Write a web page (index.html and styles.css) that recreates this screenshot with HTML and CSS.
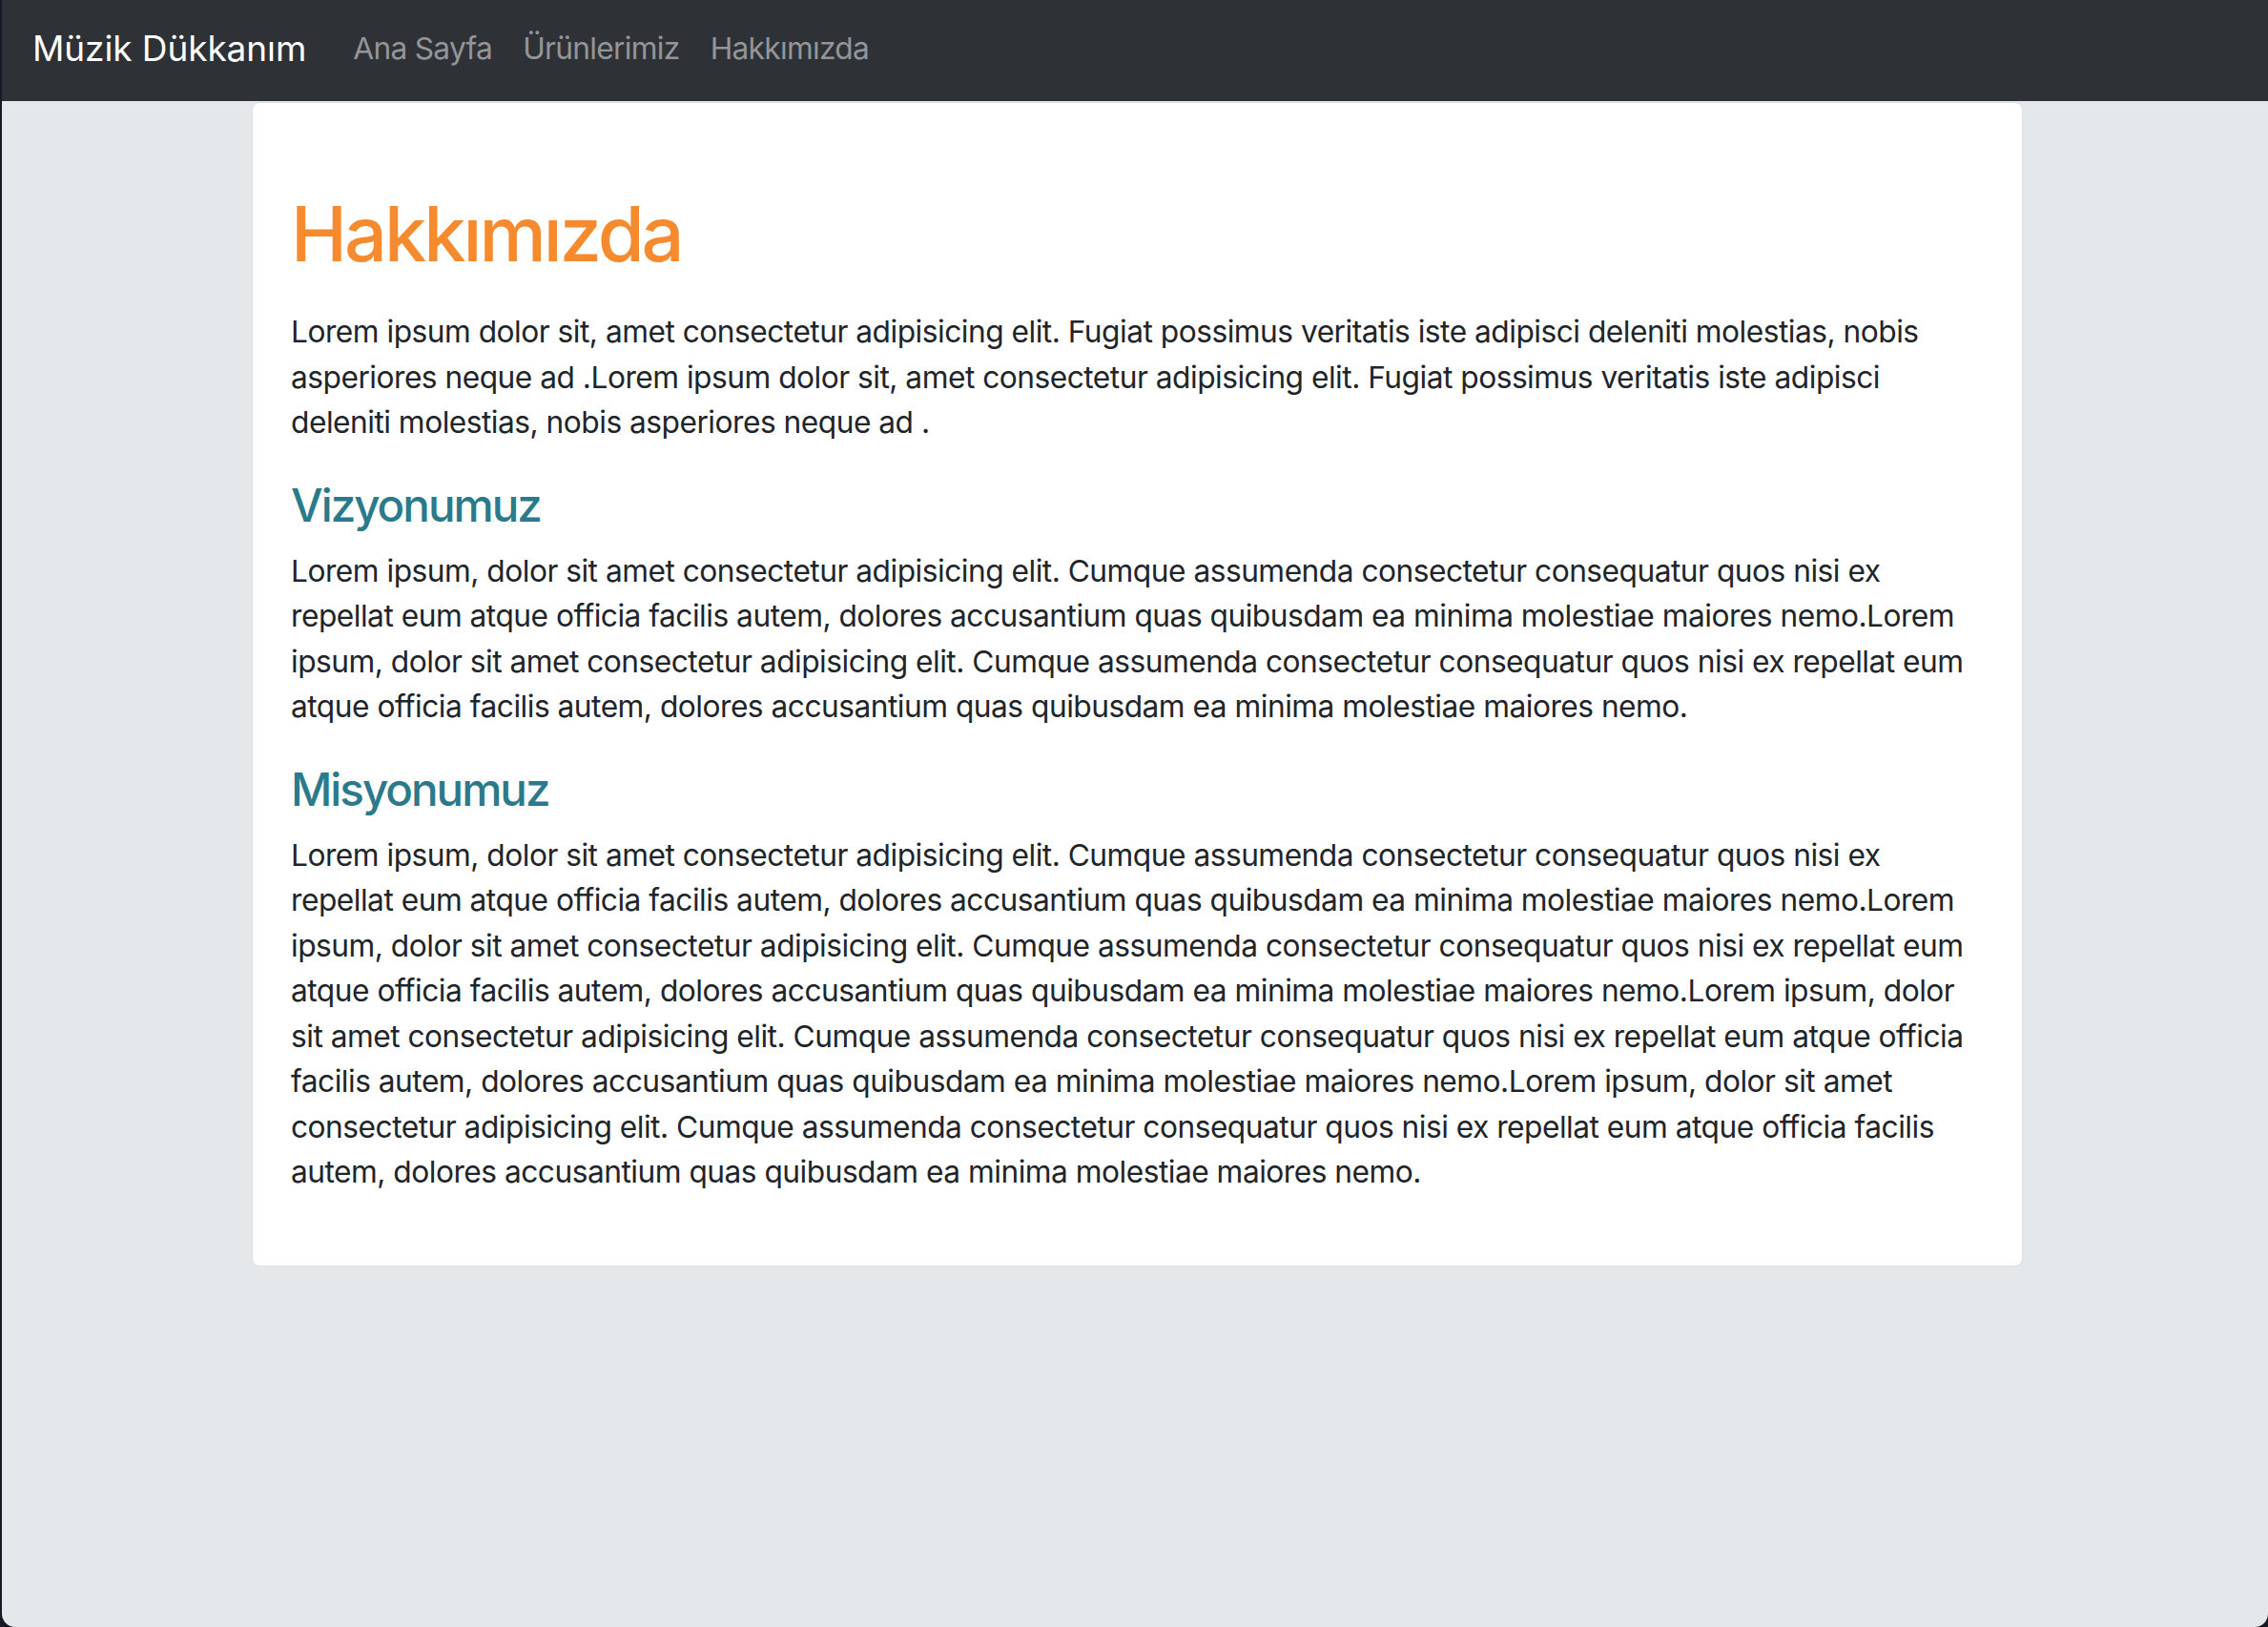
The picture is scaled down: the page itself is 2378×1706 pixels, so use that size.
FILE: index.html
```html
<!DOCTYPE html>
<html lang="tr">
<head>
<meta charset="utf-8">
<title>Hakkımızda - Müzik Dükkanım</title>
<link rel="stylesheet" href="styles.css">
</head>
<body>
<nav class="navbar">
  <a class="brand" href="#">Müzik Dükkanım</a>
  <ul class="nav-links">
    <li><a href="#">Ana Sayfa</a></li>
    <li><a href="#">Ürünlerimiz</a></li>
    <li><a href="#">Hakkımızda</a></li>
  </ul>
</nav>
<main class="page">
  <section class="card">
    <h1 class="title">Hakkımızda</h1>
    <p>Lorem ipsum dolor sit, amet consectetur adipisicing elit. Fugiat possimus veritatis iste adipisci deleniti molestias, nobis asperiores neque ad .Lorem ipsum dolor sit, amet consectetur adipisicing elit. Fugiat possimus veritatis iste adipisci deleniti molestias, nobis asperiores neque ad .</p>
    <h4 class="subtitle">Vizyonumuz</h4>
    <p>Lorem ipsum, dolor sit amet consectetur adipisicing elit. Cumque assumenda consectetur consequatur quos nisi ex repellat eum atque officia facilis autem, dolores accusantium quas quibusdam ea minima molestiae maiores nemo.Lorem ipsum, dolor sit amet consectetur adipisicing elit. Cumque assumenda consectetur consequatur quos nisi ex repellat eum atque officia facilis autem, dolores accusantium quas quibusdam ea minima molestiae maiores nemo.</p>
    <h4 class="subtitle">Misyonumuz</h4>
    <p>Lorem ipsum, dolor sit amet consectetur adipisicing elit. Cumque assumenda consectetur consequatur quos nisi ex repellat eum atque officia facilis autem, dolores accusantium quas quibusdam ea minima molestiae maiores nemo.Lorem ipsum, dolor sit amet consectetur adipisicing elit. Cumque assumenda consectetur consequatur quos nisi ex repellat eum atque officia facilis autem, dolores accusantium quas quibusdam ea minima molestiae maiores nemo.Lorem ipsum, dolor sit amet consectetur adipisicing elit. Cumque assumenda consectetur consequatur quos nisi ex repellat eum atque officia facilis autem, dolores accusantium quas quibusdam ea minima molestiae maiores nemo.Lorem ipsum, dolor sit amet consectetur adipisicing elit. Cumque assumenda consectetur consequatur quos nisi ex repellat eum atque officia facilis autem, dolores accusantium quas quibusdam ea minima molestiae maiores nemo.</p>
  </section>
</main>
</body>
</html>
```
FILE: styles.css
```css
html {
  background: #161a24;
}
body {
  margin: 0 0 0 2px;
  min-height: 100vh;
  background: #e4e8eb;
  border-radius: 0 0 14px 14px;
  font-family: Inter, "Noto Sans", sans-serif;
  color: #212529;
  overflow: hidden;
}
.navbar {
  height: 106px;
  background: #2e3236;
  display: flex;
  align-items: center;
  padding: 0 0 6px 32px;
  box-sizing: border-box;
}
.brand {
  color: #ffffff;
  text-decoration: none;
  font-size: 37px;
  letter-spacing: -0.1px;
  margin-right: 49px;
}
.nav-links {
  display: flex;
  list-style: none;
  margin: 0;
  padding: 0;
  gap: 32px;
}
.nav-links a {
  color: #939598;
  text-decoration: none;
  font-size: 31.7px;
  letter-spacing: -0.7px;
}
.page {
  padding-left: 5px;
}
.card {
  width: 1857px;
  box-sizing: border-box;
  margin: 1px auto 0;
  background: #ffffff;
  border: 1px solid #dcdfe2;
  border-radius: 8px;
  padding: 40px 52px 40px 40px;
}
.title {
  margin: 50px 0 31px;
  font-size: 79.2px;
  line-height: 95px;
  font-weight: 500;
  color: #f68a2f;
  letter-spacing: -3px;
}
.subtitle {
  margin: 0 0 17px;
  font-size: 47.5px;
  line-height: 57px;
  font-weight: 500;
  color: #2b7a8b;
  letter-spacing: -2px;
}
.card p {
  margin: 0 0 34px;
  font-size: 31.7px;
  line-height: 47.5px;
  letter-spacing: -0.5px;
}
```
